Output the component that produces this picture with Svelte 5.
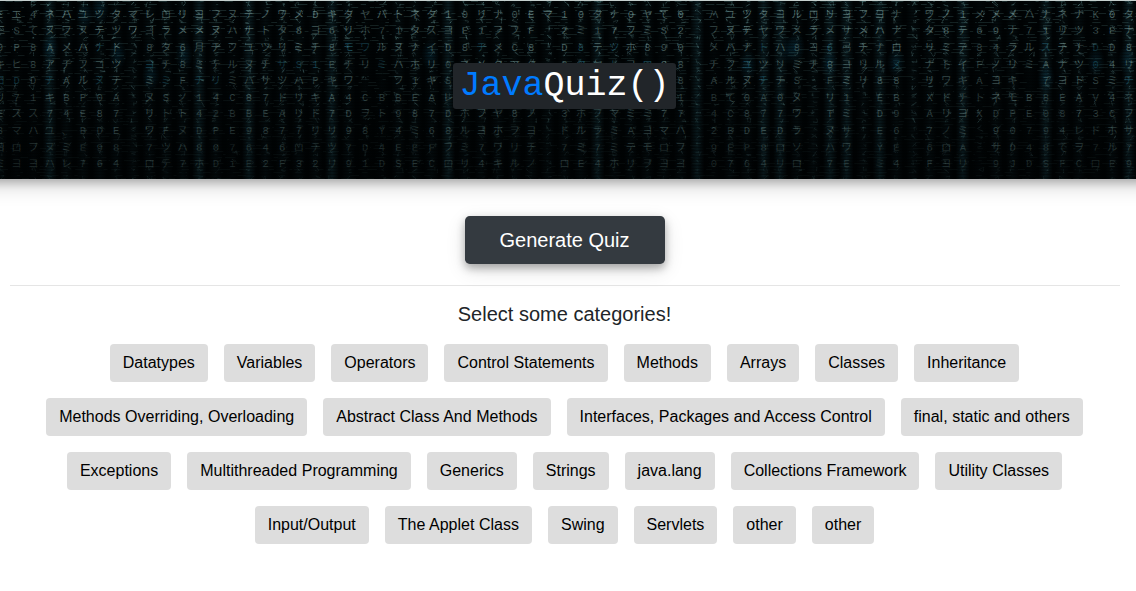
<script>
  const pitch = 16.6;
  const columns = [
    'E三0キ日リE8ヨミ', 'エSPヒD7スマロヨ', '4て88D1スハフヨ', 'ネヌAアチキ7ユヌハ', 'ハフメチAB4、ミレ',
    'ユヌハフルPEBE7', 'ツテナコヌ08D96', 'タツトツテA7E84', 'マワ        ', 'レヨ8ヨミヌリワ7ロ',
    'ロラタチミSトFツテ', 'リメ68Fノトヌハ7', 'ヨメ月ミチ14D8ホ', 'フヌチテリ42P0D', 'ヌハフルミCBE7i',
    'テナユヌハ8B96E', 'ノトツチサ7E842', 'ワタリサツドA76F', 'メ8ミSハリリ7ロ3', 'Dヨチ1Pキドリテ2',
    'キ68EキA7リツリ', 'タリモチワ4D979', 'ヤホワリ Cヲ8D1', 'ハ7ルミ BトY4D', 'ト1ヌハフB94ES',
    'ネタナホ1E8ミEE', 'タスイリキA76FC', '1ヨD0SレD8フロ', '0E8ネタCホルミリ', 'リ1チメノ7フヨ74',
    'ナフメタナリヤホワキ', '0フCマリワ8ヲリル', 'EF8タヨチノヨチノ', 'マ         ', '12D0S43ド7ロ',
    '0ミ8タリCホルミE', 'タ1テヤナ7フラ74', 'ナ7ツトリレマミミホ', '0フホヨミAミAテリ', 'ヤミ8ロタEミヨモヲ',
    'てS9Cミワ7マロヨ', '0208817ハフヨ', '          ', 'ハフメチAB4290', 'ユヌハフルてCBE7',
    'ツテナユヌ08DP6', 'タヤトツチA7E84', 'ヨワハリチ07Dロリ', 'ルメ8ミSヌワラソロ', 'ロラヨチ      ',
    'リメ68FリTヌハ7', 'ヨサ弓ヨミ1ミサワE', 'フメチリリ     ', 'ヨハナル8EDEYミ', 'ナナロヌ8B96E4',
    '          ', 'ワタリナリXA76F', 'ノ8ミトワドリノロヨ', '1テテイキチヨミAリ', 'メ68FAトX   ',
    'メ94ノヨネD9サ9', 'メナラリキモP0DJ', 'ハ7ルミ BE74D', 'ナ1スA78098S', 'ネリテナヨE84てF',
    'ナツナツトA7レヲC', 'K3D0SV3ド7ロ', '0ED4ミ4CホルE', 'タナ8リチネフサ79'
  ];
  const glow = [3, 12, 15, 20, 27, 36, 42, 46, 47, 50, 51, 53, 58, 63, 68];
  const quiet = [1, 2, 14, 22, 23, 43, 59, 62, 66];
  const thread = [8, 33, 39, 42, 49, 52, 55];
  let seed = 41;
  const random = () => {
    seed = (seed * 1664525 + 1013904223) % 4294967296;
    return seed / 4294967296;
  };

  const glyphs = [];
  columns.forEach((text, k) => {
    [...text].forEach((ch, r) => {
      if (ch === ' ') return;
      const blue = r > 1 && r < 5 && random() < 0.15;
      glyphs.push({
        ch, x: k * pitch, y: 17.8 + r * 16.6,
        fill: blue ? '#2f7d92' : '#80a5a2',
        opacity: (quiet.includes(k) ? 0.85 : 1) * (0.64 - r * 0.037) * (0.75 + random() * 0.35)
      });
    });
  });

  // Small broken strokes fill the space between the main characters, fading downwards.
  const bands = Array.from({ length: 22 }, (_, r) => {
    let d = '';
    columns.forEach((_, k) => {
      const isThread = thread.includes(k);
      if (!isThread && random() < (quiet.includes(k) ? 0.65 : 0.12)) return;
      const x = k * pitch + (isThread ? -2 : random() * 5 - 5);
      const y = r * 8.3 + 1;
      const p = () => `${(x + random() * 6).toFixed(1)} ${(y + random() * 6).toFixed(1)}`;
      d += `M${p()}L${p()}L${p()}M${p()}L${p()}`;
    });
    return { d, opacity: Math.max(0.14, 0.48 - r * 0.017) };
  });
  const grain = Array.from({ length: 60 }, (_, r) => {
    let d = '';
    for (let i = 0; i < 60; i++) d += `M${(random() * 1136).toFixed(1)} ${r * 3 + 1.5}h${(1 + random() * 8).toFixed(1)}`;
    return { d, opacity: Math.max(0.07, 0.28 - r * 0.005) };
  });

  const beams = columns.map((_, k) => ({
    x: k * pitch - 7,
    o: glow.includes(k) ? 0.42 : quiet.includes(k) ? 0.06 : 0.15
  }));
  const blooms = [[50, 48], [85, 15], [118, 54], [100, 9], [151, 76], [184, 55], [430, 55], [748, 65], [789, 50], [796, 47], [829, 63], [896, 62], [1046, 78], [1096, 62], [1127, 60]];

  const categories = [
    'Datatypes', 'Variables', 'Operators', 'Control Statements', 'Methods', 'Arrays', 'Classes', 'Inheritance',
    'Methods Overriding, Overloading', 'Abstract Class And Methods', 'Interfaces, Packages and Access Control', 'final, static and others',
    'Exceptions', 'Multithreaded Programming', 'Generics', 'Strings', 'java.lang', 'Collections Framework', 'Utility Classes',
    'Input/Output', 'The Applet Class', 'Swing', 'Servlets', 'other', 'other'
  ];
</script>

<header>
  <svg class="rain" viewBox="0 0 1136 179" width="1136" height="179" aria-hidden="true">
    <defs>
      <linearGradient id="beam" x1="0" y1="0" x2="1" y2="0">
        <stop offset="0" stop-color="#173c45" stop-opacity="0" />
        <stop offset=".5" stop-color="#173c45" />
        <stop offset="1" stop-color="#173c45" stop-opacity="0" />
      </linearGradient>
      <linearGradient id="fade" x1="0" y1="0" x2="0" y2="1">
        <stop offset="0" stop-color="#000" stop-opacity="0" />
        <stop offset="1" stop-color="#000" stop-opacity=".2" />
      </linearGradient>
      <radialGradient id="bloom">
        <stop offset="0" stop-color="#0d506c" stop-opacity=".28" />
        <stop offset="1" stop-color="#0d506c" stop-opacity="0" />
      </radialGradient>
      <pattern id="scan" width="4" height="3" patternUnits="userSpaceOnUse">
        <rect width="4" height="1" fill="#000" opacity=".35" />
      </pattern>
    </defs>
    <rect width="1136" height="179" fill="#000304" />
    {#each beams as b}
      <rect x={b.x} y="0" width="14" height="179" fill="url(#beam)" opacity={b.o} />
    {/each}
    {#each blooms as [x, y]}
      <ellipse cx={x} cy={y} rx="9" ry="15" fill="url(#bloom)" />
    {/each}
    {#each grain as g}
      <path d={g.d} stroke="#54807f" stroke-width="1" opacity={g.opacity} />
    {/each}
    {#each bands as b}
      <path d={b.d} fill="none" stroke="#5f8c8d" stroke-width=".9" opacity={b.opacity} />
    {/each}
    {#each glyphs as g}
      <text x={g.x} y={g.y} fill={g.fill} opacity={g.opacity} text-anchor="middle">{g.ch}</text>
    {/each}
    <rect width="1136" height="179" fill="url(#scan)" />
    <rect width="1136" height="179" fill="url(#fade)" />
    <rect width="1136" height="1" fill="#c5cfcd" />
  </svg>
  <h1><kbd><span>Java</span>Quiz()</kbd></h1>
</header>

<main>
  <button class="generate">Generate Quiz</button>
  <hr />
  <h2>Select some categories!</h2>
  <div class="categories">
    {#each categories as name}
      <button class="category">{name}</button>
    {/each}
  </div>
</main>

<style>
  :global(body) {
    margin: 0;
    background: #fff;
    color: #212529;
    font: 16px/1.5 'Liberation Sans', Arial, sans-serif;
    overflow: hidden;
  }
  header {
    position: relative;
    box-sizing: border-box;
    height: 179px;
    margin: 0 -40px;
    padding: 63px 47px 0 40px;
    background: #000;
    box-shadow: 0 4px 8px rgba(0, 0, 0, 0.2), 0 6px 20px rgba(0, 0, 0, 0.19);
  }
  .rain {
    position: absolute;
    top: 0;
    left: 40px;
    font: 10.5px 'Liberation Mono', 'Noto Sans CJK JP', monospace;
  }
  h1 {
    position: relative;
    display: flex;
    justify-content: center;
    margin: 0;
    font-size: 40px;
    font-weight: 400;
    line-height: 1.2;
  }
  kbd {
    padding: 3px 6.4px;
    border-radius: 3.2px;
    background: #212529;
    color: #fff;
    font: 35px/40px 'Liberation Mono', monospace;
  }
  kbd span {
    color: #007bff;
  }
  main {
    width: 1110px;
    padding: 37px 9.5px 0;
    text-align: center;
  }
  button {
    border: 1px solid transparent;
    font-family: inherit;
    line-height: 1.5;
  }
  .generate {
    display: block;
    width: 200px;
    height: 48px;
    margin: 0 auto;
    padding: 8px 16px;
    border-radius: 4.8px;
    background: #343a40;
    color: #fff;
    font-size: 20px;
    box-shadow: 0 4px 8px rgba(0, 0, 0, 0.3), 0 6px 20px rgba(0, 0, 0, 0.12);
  }
  hr {
    height: 0;
    margin: 21px 0 16px;
    border: 0;
    border-top: 1px solid rgba(0, 0, 0, 0.1);
  }
  h2 {
    margin: 0 0 18px;
    font-size: 20px;
    font-weight: 400;
    line-height: 24px;
  }
  .categories {
    display: flex;
    flex-wrap: wrap;
    justify-content: center;
    gap: 16px;
  }
  .category {
    height: 38px;
    padding: 6px 12px;
    border-radius: 4px;
    background: #ddd;
    color: #000;
    font-size: 16px;
    word-spacing: 0.12px;
  }
</style>
